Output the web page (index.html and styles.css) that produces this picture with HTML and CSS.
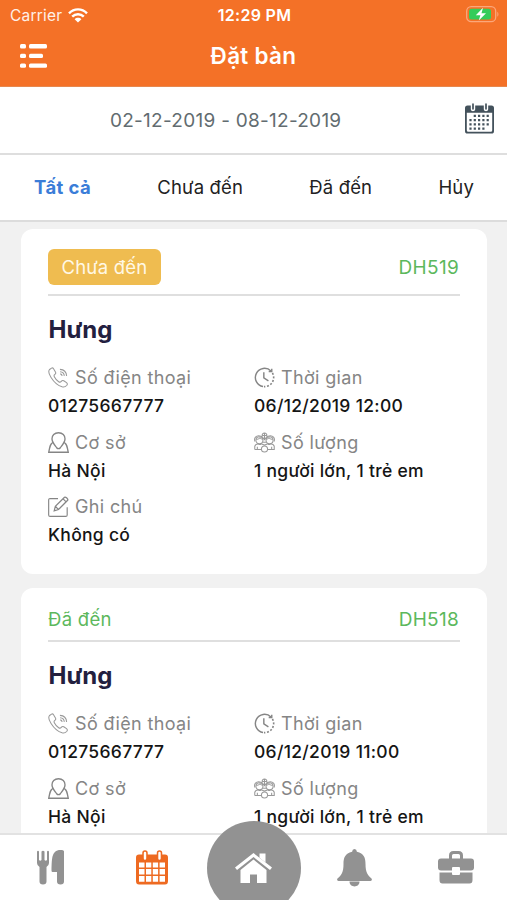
FILE: index.html
```html
<!DOCTYPE html>
<html lang="vi">
<head>
<meta charset="utf-8">
<title>Đặt bàn</title>
<link rel="stylesheet" href="styles.css">
</head>
<body>
<svg class="defs" aria-hidden="true">
  <symbol id="phone" viewBox="0 0 22 22">
    <path d="M3.700 1.200 1.700 2.600C.4 4 .8 7.300 3.200 11c3 4.700 7.500 8.600 11.600 9.800 2.300.6 3.800-.3 5-1.700.8-1 .5-2-.4-2.700l-2.900-2c-1-.6-1.900-.3-2.600.6-.8 1-1.700 1.100-2.700.4-2.100-1.400-3.600-3.200-4.600-5.200-.5-1-.3-1.800.6-2.500.9-.6 1.200-1.500.6-2.500L5.800 1.800C5.300 1 4.500.7 3.700 1.200z"/>
    <path d="M12.500 2.500c4.200.2 6.800 3 7 7M12.700 5c2.700.2 4.200 1.900 4.400 4.300M12.800 7.200c1.300.2 1.900.9 2 2.200"/>
  </symbol>
  <symbol id="clock" viewBox="0 0 22 22">
    <path stroke-width="1.500" d="M17.800 4.200A9.600 9.600 0 1 0 9.500 20.500"/>
    <path stroke-width="1.700" stroke-dasharray="2 1.800" d="M19.300 6.200A9.600 9.600 0 0 1 10.500 20.600"/>
    <path stroke-width="1.500" d="M18.600 1.800v3h-3.200M10.300 5.500v6l4.800 3"/>
  </symbol>
  <symbol id="person" viewBox="0 0 22 22">
    <path stroke-width="1.400" d="M11 .8c-4.200 0-7 2.800-6.800 6.700.2 3.500 3 6.500 4.900 9 1 1.300 2.800 1.300 3.800 0 1.900-2.500 4.700-5.500 4.900-9C18 3.600 15.200.8 11 .8zM5 11c-2.500 1.200-3 3.700-4.200 10.200h20.400c-1.200-6.500-1.700-9-4.200-10.200"/>
  </symbol>
  <symbol id="group" viewBox="0 0 22 22">
    <path d="M1 10C-.5 6 2.500 3.700 5.500 4c3.500.2 4.500 2.500 5.500 4 1-1.500 2-3.800 5.500-4C19.500 3.700 22.500 6 21 10M8.700 4.500C7.500 0 14.500 0 13.300 4.500M8.700 3.700h4.600M11 1v7M2.300 7.500c2 .5 3-.2 4-1.500.8 1 2 1.500 3 1.500M19.700 7.500c-2 .5-3-.2-4-1.500-.8 1-2 1.500-3 1.500"/>
    <circle cx="5.700" cy="8.700" r="3.700"/><circle cx="16.300" cy="8.700" r="3.700"/><circle cx="11" cy="17.800" r="3.200"/>
    <path d="M.8 18.300v-3.200c.2-1.700 2-2.400 4-2.700.8 1 1.800 1 2.600 0l3.600 1.300 3.600-1.300c.8 1 1.800 1 2.600 0 2 .3 3.800 1 4 2.700v3.200h-7M.8 18.300h7M3.500 15.500v3M18.500 15.500v3M9.500 10.800h3"/>
  </symbol>
  <symbol id="note" viewBox="0 0 22 22">
    <path stroke-width="1.200" d="M10.500 2.700H2.200C1.200 2.700.7 3.200.7 4.200v15.600c0 1 .5 1.500 1.500 1.500h16.400c1 0 1.500-.5 1.500-1.500v-8"/>
    <path stroke-width="1.300" d="m6.500 15.500 1.200-4.800L17.300 1.300c1-.9 4.300 2 3.300 3.200L11 14.200zM7.700 10.700l3.300 3.500M15.800 3l3.200 3.200"/>
  </symbol>
</svg>
<div class="app">
  <header class="top">
    <div class="status">
      <span class="carrier">Carrier
        <svg width="20" height="15" viewBox="0 0 20 15" fill="none" stroke="#fff" stroke-width="2.400"><path d="M1 5.300c5-5.200 13-5.200 18 0M4.200 8.700c3.200-3.300 8.400-3.300 11.600 0"/><path fill="#fff" stroke="none" d="M6.600 11.200c1.900-1.900 4.900-1.900 6.800 0L10 14.600z"/></svg>
      </span>
      <span class="time">12:29 PM</span>
      <svg class="battery" width="34" height="17" viewBox="0 0 34 17"><rect x="1.700" y=".7" width="29" height="15" rx="4.500" fill="none" stroke="#fba77a" stroke-width="1.300"/><rect x="4" y="2.800" width="22" height="10.800" rx="2.500" fill="#35cc5a"/><path d="M32.300 5.800c1.500.7 1.500 4.300 0 5z" fill="#fba77a"/><path d="M18 1.800 10.800 9.200h4.600L13.800 14.600 21 7.300h-4.500z" fill="#fff"/></svg>
    </div>
    <div class="titlebar">
      <svg class="menu" width="28" height="24" viewBox="0 0 28 24" fill="#fff"><rect y="0" width="6" height="4.400" rx="1.500"/><rect y="9.700" width="6" height="4.400" rx="1.500"/><rect y="19.400" width="6" height="4.400" rx="1.500"/><rect x="9" y="0" width="18" height="4.400" rx="1.500"/><rect x="9" y="9.700" width="14" height="4.400" rx="1.500"/><rect x="9" y="19.400" width="18" height="4.400" rx="1.500"/></svg>
      <h1>Đặt bàn</h1>
      <span></span>
    </div>
  </header>
  <div class="range">
    <span class="dates">02-12-2019 - 08-12-2019</span>
    <svg class="cal" width="29" height="31" viewBox="0 0 29 31"><path fill="#44525c" d="M2.500 2.500h3.300v3.700c0 2.600 4.400 2.600 4.400 0V2.500h8.600v3.700c0 2.600 4.400 2.600 4.400 0V2.500h3.300Q29 2.500 29 5v23q0 2.600-2.500 2.600h-24Q0 30.600 0 28V5q0-2.500 2.500-2.500zM1.800 9.700v17.600q0 1.500 1.500 1.500h22.400q1.500 0 1.500-1.500V9.700z"/><path stroke="#44525c" stroke-width="1.700" stroke-linecap="round" d="M8 1.200v4.600M21 1.200v4.600"/><path stroke="#44525c" stroke-width="2.200" stroke-dasharray="2.200 2.100" d="M8.700 12.800h16M4.400 17.100h20M4.400 21.400h20M4.400 25.700h15.500"/></svg>
  </div>
  <nav class="tabs">
    <a class="on">Tất cả</a><a>Chưa đến</a><a>Đã đến</a><a>Hủy</a>
  </nav>
  <main class="list">
    <article class="card">
      <div class="head"><span class="badge">Chưa đến</span><span class="code">DH519</span></div>
      <h2>Hưng</h2>
      <div class="grid">
        <div class="cell"><div class="label"><svg class="light"><use href="#phone"/></svg>Số điện thoại</div><div class="value">01275667777</div></div>
        <div class="cell"><div class="label"><svg><use href="#clock"/></svg>Thời gian</div><div class="value">06/12/2019 12:00</div></div>
        <div class="cell"><div class="label"><svg><use href="#person"/></svg>Cơ sở</div><div class="value">Hà Nội</div></div>
        <div class="cell"><div class="label"><svg class="light"><use href="#group"/></svg>Số lượng</div><div class="value">1 người lớn, 1 trẻ em</div></div>
        <div class="cell"><div class="label"><svg><use href="#note"/></svg>Ghi chú</div><div class="value">Không có</div></div>
      </div>
    </article>
    <article class="card">
      <div class="head"><span class="done">Đã đến</span><span class="code">DH518</span></div>
      <h2>Hưng</h2>
      <div class="grid">
        <div class="cell"><div class="label"><svg class="light"><use href="#phone"/></svg>Số điện thoại</div><div class="value">01275667777</div></div>
        <div class="cell"><div class="label"><svg><use href="#clock"/></svg>Thời gian</div><div class="value">06/12/2019 11:00</div></div>
        <div class="cell"><div class="label"><svg><use href="#person"/></svg>Cơ sở</div><div class="value">Hà Nội</div></div>
        <div class="cell"><div class="label"><svg class="light"><use href="#group"/></svg>Số lượng</div><div class="value">1 người lớn, 1 trẻ em</div></div>
      </div>
    </article>
  </main>
  <nav class="bottom">
    <a><svg width="28" height="35" viewBox="0 0 28 35" fill="#929292"><path d="M0 1.500Q1 0 2 1.500V10q1.250 1.500 2.500 0V1.500Q6 0 7.500 1.500V10q1.250 1.500 2.500 0V1.500Q11 0 12 1.500V13q0 2.500-2.500 4v14.500q0 3-3.500 3t-3.500-3V17Q0 15.500 0 13zM27 1.500v30q0 3-3.500 3t-3.500-3V22h-4.500q-1 0-1-1.500C15 10 14 0 23.500 0 26 0 27 .5 27 1.500z"/></svg></a>
    <a><svg width="32" height="35" viewBox="0 0 32 35"><path fill="#ee6a21" d="M3 4.500h26q3 0 3 3V31q0 3.500-3 3.500H3Q0 34.500 0 31V7.500q0-3 3-3z"/><path fill="#fff" d="M3 12.500h5.500v5H3zM10 12.500h5.300v5H10zM16.800 12.500h5.300v5h-5.300zM23.600 12.500H29v5h-5.400zM3 19h5.500v5.500H3zM10 19h5.300v5.500H10zM16.800 19h5.300v5.500h-5.300zM23.600 19H29v5.500h-5.400zM3 26h5.500v5.800H3zM10 26h5.300v5.800H10zM16.800 26h5.300v5.800h-5.300zM23.600 26H29v5.800h-5.400z"/><path stroke="#ee6a21" stroke-width="5.500" stroke-linecap="round" d="M9 3v5M23.500 3v5"/><path stroke="#fff" stroke-width="2.400" stroke-linecap="round" d="M9 3v5.500M23.500 3v5.500"/></svg></a>
    <a class="slot"><span class="home"><svg width="37" height="32" viewBox="0 0 37 32" fill="#fff"><path d="M18.500 1 37 15.500l-2 2.500L18.500 5 2 18 0 15.500z"/><path d="M24.500 1.500h6v9l-6-4.800zM18.500 7.500 31.500 18v13H22v-8.500h-7V31H5.500V18z"/></svg></span></a>
    <a><svg width="35" height="38" viewBox="0 0 35 38" fill="#929292"><path d="M17.500 0q2.200 0 2.400 2.700C27 4 28.500 9 28.500 15c0 8 2 11 6 14.500.8 1 .3 2.500-1 2.500h-32c-1.300 0-1.800-1.500-1-2.500C4.500 26 6.500 23 6.500 15c0-6 1.500-11 8.600-12.300Q15.300 0 17.500 0z"/><path d="M12.500 32.500h10c0 6.500-10 6.500-10 0z"/></svg></a>
    <a><svg width="36" height="33" viewBox="0 0 36 33" fill="#929292"><path fill="none" stroke="#929292" stroke-width="3" d="M12.500 8V4.500q0-3 3-3h5q3 0 3 3V8"/><path d="M3 7.500h30q3 0 3 3v6q0 3-3 3H22V17q0-1-1-1h-6q-1 0-1 1v2.500H3q-3 0-3-3v-6q0-3 3-3zM1.500 21.500H14V23q0 1 1 1h6q1 0 1-1v-1.500h12.500V29q0 3.500-3 3.500H4.500q-3 0-3-3.500z"/></svg></a>
  </nav>
</div>
</body>
</html>
```
FILE: styles.css
```css
* { box-sizing: border-box; }
body { margin: 0; font-family: Inter, "Noto Sans", sans-serif; font-size: 18px; color: #222; }
.defs { position: absolute; width: 0; height: 0; }
.app { display: flex; flex-direction: column; height: 900px; background: #f1f1f1; overflow: hidden; }
h1, h2 { margin: 0; }
svg { display: block; flex: none; }

.top { height: 87px; flex: none; background: #f47127; color: #fff; border-bottom: 1px solid #e6884f; }
.status { display: grid; grid-template-columns: 1fr auto 1fr; align-items: center; height: 30px; padding: 0 8px 0 10px; font-size: 15.500px; }
.carrier { display: flex; align-items: center; gap: 6px; color: #fff0e7; letter-spacing: .2px; }
.time { font-size: 16px; font-weight: 600; letter-spacing: .3px; }
.battery { justify-self: end; margin-top: -2px; }
.titlebar { display: grid; grid-template-columns: 1fr auto 1fr; align-items: center; height: 52px; padding: 0 20px; }
.menu { margin-top: -1px; }
.titlebar h1 { font-size: 22.500px; font-weight: 600; line-height: 52px; letter-spacing: .3px; }

.range { display: flex; align-items: center; justify-content: space-between; height: 68px; flex: none; padding: 0 13px 2px 110px; background: #fff; border-bottom: 2px solid #dedede; }
.dates { font-size: 19px; letter-spacing: .27px; color: #626c70; padding-top: 2px; }
.cal { margin-top: -2px; }
.tabs { display: flex; align-items: center; justify-content: space-between; height: 67px; flex: none; padding: 0 33px 2px 34px; background: #fff; border-bottom: 2px solid #dcdcdc; font-size: 18.500px; letter-spacing: .15px; }
.tabs .on { color: #3b7dd8; font-weight: 700; letter-spacing: .4px; }

.list { flex: 1; min-height: 0; overflow: hidden; padding: 7px 20px 0 21px; }
.card { background: #fff; border-radius: 12px; padding: 20px 27px 18px; margin-bottom: 14.500px; }
.head { display: flex; align-items: center; justify-content: space-between; padding-bottom: 9px; border-bottom: 2px solid #dfdfdf; line-height: 23px; font-size: 18.500px; color: #5cb85c; letter-spacing: .15px; }
.badge { background: #efbc50; color: #fff8e5; border-radius: 6px; padding: 0 13.500px; line-height: 36px; }
.done { letter-spacing: .3px; }
.code { padding-right: 1px; font-size: 19px; letter-spacing: .3px; }
.card h2 { font-size: 24px; line-height: 40px; font-weight: 700; color: #23203f; margin: 13.500px 0 12.500px .5px; }
.grid { display: grid; grid-template-columns: 1fr 1fr; }
.cell { height: 64.600px; white-space: nowrap; }
.label { display: flex; align-items: center; gap: 6px; height: 31px; color: #858585; letter-spacing: .36px; }
.label svg { width: 21px; height: 21px; fill: none; stroke: #858585; stroke-width: 1.100; }
.label svg.light { stroke: #999; }
.value { line-height: 25px; font-size: 17.500px; font-weight: 500; color: #151515; letter-spacing: .3px; }

.bottom { display: grid; grid-template-columns: repeat(5, 1fr); height: 67px; flex: none; background: #fff; border-top: 2px solid #e2e2e2; }
.bottom a { display: flex; align-items: center; justify-content: center; }
.slot { position: relative; }
.home { position: absolute; top: -14px; left: 50%; margin-left: -46.500px; width: 94px; height: 94px; border-radius: 50%; background: #929292; display: flex; align-items: center; justify-content: center; }
```
